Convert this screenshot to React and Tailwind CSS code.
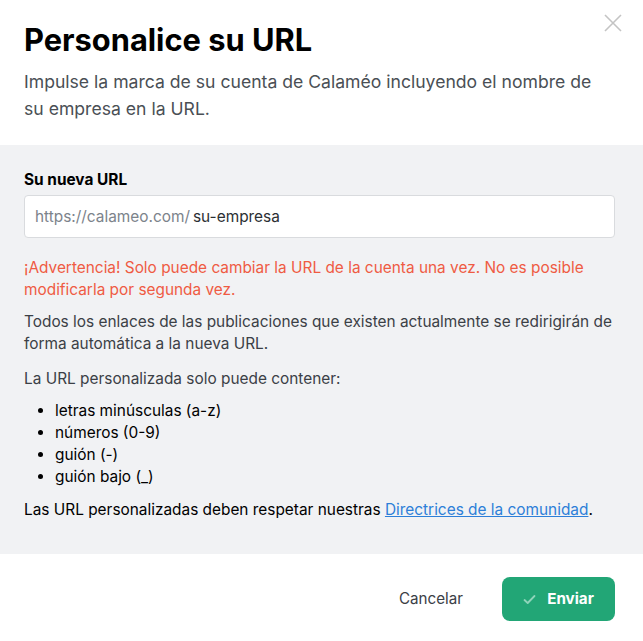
export default function App() {
  return (
    <div className="w-[643px] h-[641px] bg-white relative text-[#1b1b1b]" style={{ fontFamily: "Inter, 'Noto Sans', sans-serif" }}>
      <button className="absolute right-[21px] top-[14px] w-[18px] h-[18px] text-[#c4c4c4]">
        <svg viewBox="0 0 18 18" width="18" height="18" fill="none" stroke="currentColor" strokeWidth="1.6">
          <path d="M1 1L17 17M17 1L1 17" />
        </svg>
      </button>
      <div className="px-6 pt-[22px] pb-[23px]">
        <h1 className="text-[30.8px] leading-[36px] font-bold text-black">Personalice su URL</h1>
        <p className="mt-[10px] max-w-[580px] text-[17.6px] leading-[27px] text-[#4a4f55]">
          Impulse la marca de su cuenta de Calaméo incluyendo el nombre de su empresa en la URL.
        </p>
      </div>
      <div className="bg-[#f1f2f4] pl-6 pr-[28px] pt-[24px] pb-[33px] text-[15.4px] leading-[22px]">
        <div className="font-bold text-black leading-[22px]">Su nueva URL</div>
        <div className="mt-[4px] h-[43px] bg-white border border-[#d9dbde] rounded-[4px] flex items-center px-[10px]">
          <span className="text-[#7c838b]">https://calameo.com/</span>
          <span className="ml-[3px] text-[#2b2f33]">su-empresa</span>
        </div>
        <p className="mt-[19px] text-[#ef5b43]">
          ¡Advertencia! Solo puede cambiar la URL de la cuenta una vez. No es posible modificarla por segunda vez.
        </p>
        <p className="mt-[10px] text-[#3b4046]">
          Todos los enlaces de las publicaciones que existen actualmente se redirigirán de forma automática a la nueva URL.
        </p>
        <p className="mt-[13px] text-[#3b4046]">La URL personalizada solo puede contener:</p>
        <ul className="mt-[10px] pl-[31px] list-disc text-black">
          <li>letras minúsculas (a-z)</li>
          <li>números (0-9)</li>
          <li>guión (-)</li>
          <li>guión bajo (_)</li>
        </ul>
        <p className="mt-[11px] text-black">
          Las URL personalizadas deben respetar nuestras{" "}
          <a href="#" className="text-[#2d7fd8] underline">Directrices de la comunidad</a>.
        </p>
      </div>
      <div className="flex justify-end items-center gap-[39px] px-[28px] pt-[23px]">
        <button className="text-[15.2px] text-[#3b4046]">Cancelar</button>
        <button className="w-[113px] h-[44px] rounded-[8px] bg-[#22a676] text-white font-bold text-[15.2px] flex items-center justify-center gap-[11px]">
          <svg width="13" height="11" viewBox="0 0 13 11" fill="none" stroke="#8fd4ba" strokeWidth="1.8" strokeLinecap="round" strokeLinejoin="round">
            <path d="M1.5 6L4.7 9L11.5 2" />
          </svg>
          Enviar
        </button>
      </div>
    </div>
  );
}
